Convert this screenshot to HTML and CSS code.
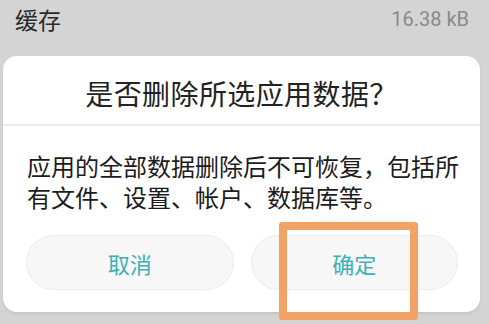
FILE: index.html
```html
<!DOCTYPE html>
<html lang="zh-CN">
<head>
    <meta charset="UTF-8">
    <meta name="viewport" content="width=device-width, initial-scale=1.0">
    <title>删除应用数据</title>
    <link rel="stylesheet" href="styles.css">
</head>
<body>
    <div class="setting-row">
        <span class="setting-name">缓存</span>
        <span class="setting-value">16.38 kB</span>
    </div>

    <div class="dialog">
        <div class="dialog-title">是否删除所选应用数据？</div>
        <div class="dialog-message">应用的全部数据删除后不可恢复，包括所有文件、设置、帐户、数据库等。</div>
        <div class="dialog-actions">
            <button class="dialog-btn">取消</button>
            <button class="dialog-btn">确定</button>
        </div>
    </div>

    <!-- highlight drawn over the confirm button -->
    <div class="highlight-box"></div>
</body>
</html>
```

FILE: styles.css
```css
body {
    margin: 0;
    width: 489px;
    height: 324px;
    overflow: hidden;
    position: relative;
    background-color: #d4d4d4;
    font-family: "Noto Sans CJK SC", "Noto Sans", sans-serif;
}
.setting-row {
    display: flex;
    justify-content: space-between;
    align-items: center;
    height: 38px;
    padding: 0 20px 0 15px;
}
.setting-name {
    font-size: 23px;
    color: #2a2a2a;
}
.setting-value {
    font-family: Roboto, "Noto Sans", sans-serif;
    font-size: 20px;
    color: #8a8a8a;
}
.dialog {
    margin: 18px 9px 0 3px;
    height: 256px;
    background: white;
    border-radius: 14px;
    box-shadow: 0 2px 3px rgba(0,0,0,0.08);
}
.dialog-title {
    padding-top: 6px;
    height: 62px;
    line-height: 62px;
    text-align: center;
    font-size: 28px;
    letter-spacing: 0.4px;
    color: #222;
    border-bottom: 2px solid #ececec;
}
.dialog-message {
    padding: 24px 8px 0 24px;
    height: 62px;
    font-size: 24px;
    line-height: 31px;
    color: #1c1c1c;
}
.dialog-actions {
    display: flex;
    gap: 17px;
    padding: 23px 22px 0 23px;
}
.dialog-btn {
    width: 208px;
    height: 55px;
    border-radius: 28px;
    border: 1px solid #ececec;
    background: #f7f7f7;
    font-family: "Noto Sans CJK SC", sans-serif;
    font-size: 22px;
    color: #3db0b6;
    padding: 0;
}
.highlight-box {
    position: absolute;
    left: 279px;
    top: 222px;
    width: 123px;
    height: 82px;
    border: 8.5px solid #f2a262;
    border-radius: 3px;
}
```
